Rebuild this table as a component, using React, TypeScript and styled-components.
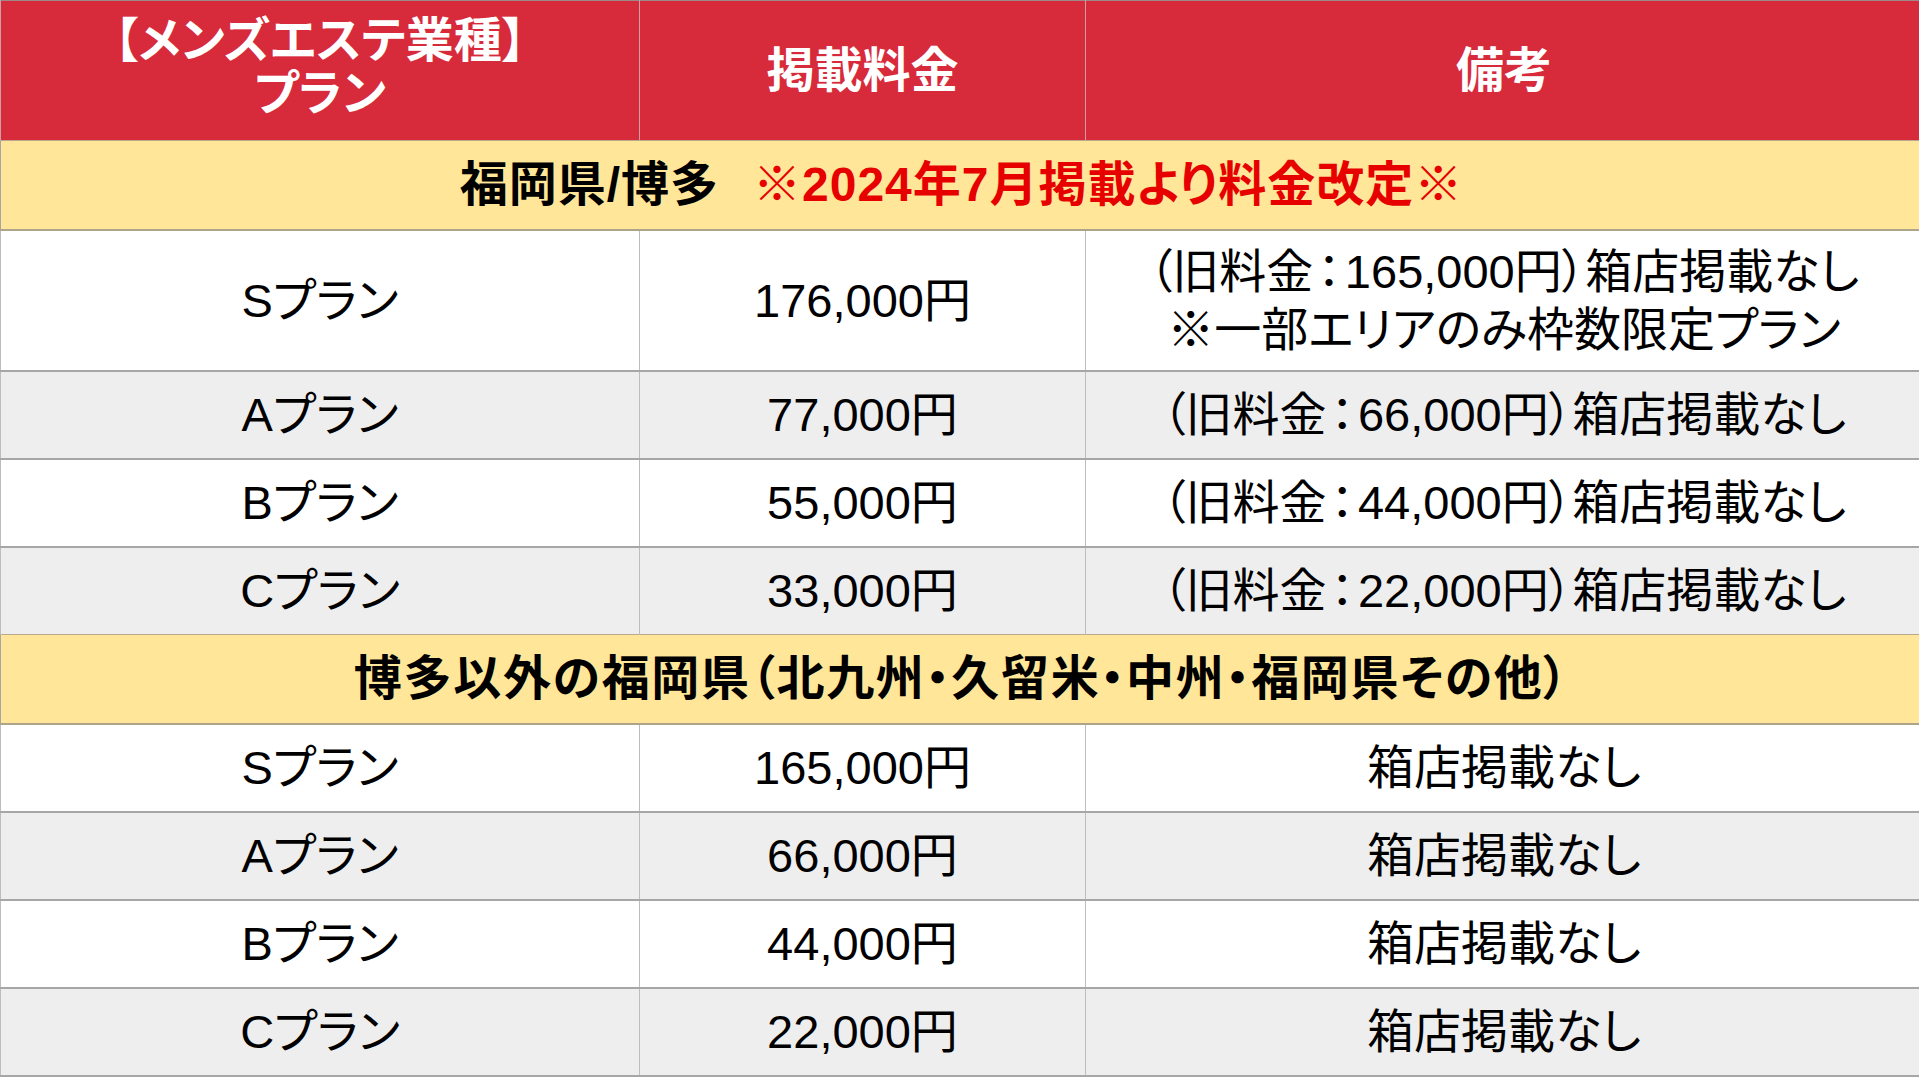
import React from 'react';
import styled, { createGlobalStyle } from 'styled-components';

const GlobalStyle = createGlobalStyle`
  html, body {
    margin: 0;
    padding: 0;
    background: #ffffff;
  }
  body {
    font-family: "Liberation Sans", "Noto Sans CJK JP", sans-serif;
    font-feature-settings: "palt";
  }
`;

const Table = styled.table`
  width: 1919px;
  border-collapse: collapse;
  table-layout: fixed;
  font-size: 47px;
  color: #000000;
  border-top: 1px solid #9c8a8a;
  border-left: 1px solid #a6a6a6;
  border-bottom: 2px solid #a6a6a6;
`;

const HeadCell = styled.th<{ $w: number }>`
  width: ${p => p.$w}px;
  height: 139px;
  padding: 0;
  background: #d72a3b;
  color: #ffffff;
  font-size: 48px;
  font-weight: 700;
  line-height: 56px;
  text-align: center;
  vertical-align: middle;
  border-left: 1px solid #c9a0a4;
`;

const HeadLine = styled.span`
  display: block;
  line-height: 60px;
  margin-top: -7px;
`;

const SectionCell = styled.td<{ $spacing: number }>`
  height: 88px;
  padding: 0;
  background: #ffe699;
  border-top: 1px solid #b9a88a;
  border-bottom: 2px solid #aca58c;
  font-size: 48px;
  font-weight: 700;
  letter-spacing: ${p => p.$spacing}px;
  text-align: center;
  vertical-align: middle;
  line-height: 56px;
`;

const Notice = styled.span`
  color: #e60000;
  margin-left: 34px;
`;

const Row = styled.tr<{ $shade: boolean }>`
  background: ${p => (p.$shade ? '#eeeeee' : '#ffffff')};
`;

const Cell = styled.td<{ $tall?: boolean }>`
  height: ${p => (p.$tall ? 139 : 86)}px;
  padding: 0;
  text-align: center;
  vertical-align: middle;
  line-height: 58px;
  border-top: 2px solid #a6a6a6;
  border-left: 1px solid #bdbdbd;
  white-space: nowrap;
`;

const Line = styled.span`
  display: block;
`;

const Colon = styled.span`
  margin: 0 4px;
`;

type Plan = { name: string; price: string; note: string[] };

const hakata: Plan[] = [
  { name: 'Sプラン', price: '176,000円', note: ['（旧料金：165,000円）箱店掲載なし', '※一部エリアのみ枠数限定プラン'] },
  { name: 'Aプラン', price: '77,000円', note: ['（旧料金：66,000円）箱店掲載なし'] },
  { name: 'Bプラン', price: '55,000円', note: ['（旧料金：44,000円）箱店掲載なし'] },
  { name: 'Cプラン', price: '33,000円', note: ['（旧料金：22,000円）箱店掲載なし'] },
];

const others: Plan[] = [
  { name: 'Sプラン', price: '165,000円', note: ['箱店掲載なし'] },
  { name: 'Aプラン', price: '66,000円', note: ['箱店掲載なし'] },
  { name: 'Bプラン', price: '44,000円', note: ['箱店掲載なし'] },
  { name: 'Cプラン', price: '22,000円', note: ['箱店掲載なし'] },
];

const renderNote = (line: string) => {
  const parts = line.split('：');
  if (parts.length < 2) return line;
  return (
    <>
      {parts[0]}
      <Colon>：</Colon>
      {parts[1]}
    </>
  );
};

const PlanRows: React.FC<{ plans: Plan[] }> = ({ plans }) => (
  <>
    {plans.map((plan, i) => {
      const tall = plan.note.length > 1;
      return (
        <Row key={plan.name + plan.price} $shade={i % 2 === 1}>
          <Cell $tall={tall}>{plan.name}</Cell>
          <Cell $tall={tall}>{plan.price}</Cell>
          <Cell $tall={tall}>
            {plan.note.map(line => (
              <Line key={line}>{renderNote(line)}</Line>
            ))}
          </Cell>
        </Row>
      );
    })}
  </>
);

const App: React.FC = () => {
  return (
    <>
      <GlobalStyle />
      <Table>
        <thead>
          <tr>
            <HeadCell $w={638}>
              <HeadLine>【メンズエステ業種】</HeadLine>
              <HeadLine>プラン</HeadLine>
            </HeadCell>
            <HeadCell $w={445}>掲載料金</HeadCell>
            <HeadCell $w={836}>備考</HeadCell>
          </tr>
        </thead>
        <tbody>
          <tr>
            <SectionCell colSpan={3} $spacing={1}>
              福岡県/博多<Notice>※2024年7月掲載より料金改定※</Notice>
            </SectionCell>
          </tr>
          <PlanRows plans={hakata} />
          <tr>
            <SectionCell colSpan={3} $spacing={1.7}>
              博多以外の福岡県（北九州・久留米・中州・福岡県その他）
            </SectionCell>
          </tr>
          <PlanRows plans={others} />
        </tbody>
      </Table>
    </>
  );
};

export default App;
